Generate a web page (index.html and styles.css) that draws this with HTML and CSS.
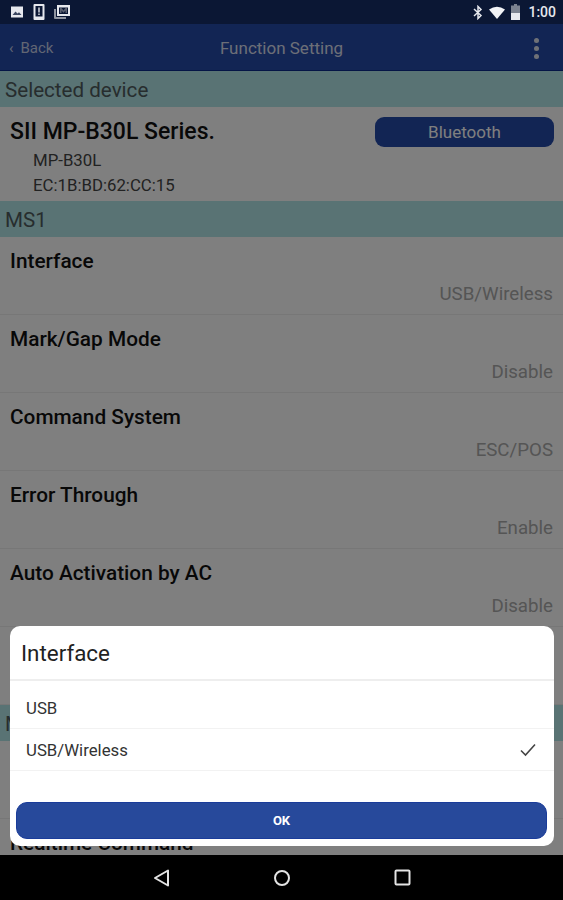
FILE: index.html
```html
<!DOCTYPE html>
<html lang="en">
<head>
  <meta charset="UTF-8" />
  <meta name="viewport" content="width=device-width, initial-scale=1.0"/>
  <title>Function Setting</title>
  <link rel="stylesheet" href="styles.css">
</head>
<body>
  <div class="screen">
    <div class="status-bar">
      <div class="status-left">
        <svg class="icon" width="16" height="16" viewBox="0 0 16 16"><path d="M2 2.500h12v11H2z" fill="#e6e8ee"/><path d="M3.500 11l3-3.500 2 2 1.500-1.300 2.500 2.800z" fill="#3a4560"/></svg>
        <svg class="icon" width="14" height="18" viewBox="0 0 14 18"><path fill-rule="evenodd" d="M2.500 1h9a1 1 0 0 1 1 1v14a1 1 0 0 1-1 1h-9a1 1 0 0 1-1-1V2a1 1 0 0 1 1-1zM3.500 3v10.500h7V3z" fill="#e6e8ee"/><path d="M6.300 4.500h1.400v5H6.300zM6.300 10.500h1.400v1.400H6.300z" fill="#e6e8ee"/></svg>
        <svg class="icon" width="18" height="16" viewBox="0 0 18 16"><path d="M1 5h2v8h10v2H2a1 1 0 0 1-1-1z" fill="#8f94a0"/><path fill-rule="evenodd" d="M4 1h13v11H4zM6 3.500V10h9V3.500z" fill="#e6e8ee"/><path d="M7 4h1.500l2 2.500 2-2.500H14v5h-1.500V6.500l-2 2.300-2-2.300V9H7z" fill="#5a6070"/></svg>
      </div>
      <div class="status-right">
        <svg class="icon" width="10" height="15" viewBox="0 0 10 15"><path d="M1 4l7 6.500L5 13.500V1.500L8 4.500 1 11" fill="none" stroke="#e6e8ee" stroke-width="1.500"/></svg>
        <svg class="icon" width="16" height="13" viewBox="0 0 16 13"><path d="M0 3.500Q8-2 16 3.500L8 13z" fill="#f2f3f6"/></svg>
        <svg class="icon" width="9" height="16" viewBox="0 0 9 16"><path d="M3 0h3v1.500h3V16H0V1.500h3z" fill="#7b8290"/><path d="M0 9h9v7H0z" fill="#e6e8ee"/></svg>
        <span class="clock">1:00</span>
      </div>
    </div>

    <div class="content">
      <div class="app-bar">
        <span class="back"><span class="chevron">&lsaquo;</span>Back</span>
        <span class="app-title">Function Setting</span>
        <span class="more"><i></i><i></i><i></i></span>
      </div>

      <div class="section">Selected device</div>
      <div class="device">
        <div class="device-info">
          <div class="device-name">SII MP-B30L Series.</div>
          <div class="device-line">MP-B30L</div>
          <div class="device-line">EC:1B:BD:62:CC:15</div>
        </div>
        <div class="conn-btn">Bluetooth</div>
      </div>

      <div class="section">MS1</div>
      <div class="row">
        <div class="row-title">Interface</div>
        <div class="row-value">USB/Wireless</div>
      </div>
      <div class="row">
        <div class="row-title">Mark/Gap Mode</div>
        <div class="row-value">Disable</div>
      </div>
      <div class="row">
        <div class="row-title">Command System</div>
        <div class="row-value">ESC/POS</div>
      </div>
      <div class="row">
        <div class="row-title">Error Through</div>
        <div class="row-value">Enable</div>
      </div>
      <div class="row">
        <div class="row-title">Auto Activation by AC</div>
        <div class="row-value">Disable</div>
      </div>
      <div class="row"></div>

      <div class="section">M</div>
      <div class="row"></div>
      <div class="row">
        <div class="row-title">Realtime Command</div>
      </div>

      <div class="overlay">
        <div class="dialog">
          <div class="dialog-title">Interface</div>
          <div class="option option-first">USB</div>
          <div class="option">
            USB/Wireless
            <svg class="check" width="18" height="14" viewBox="0 0 18 14"><path d="M2 7.500l4.500 4.500L16 1.500" fill="none" stroke="#444" stroke-width="1.600"/></svg>
          </div>
          <div class="dialog-btn">OK</div>
        </div>
      </div>
    </div>

    <div class="nav-bar">
      <svg width="17" height="18" viewBox="0 0 17 18"><path d="M15 1.500v15L2 9z" fill="none" stroke="#e4e4e4" stroke-width="2" stroke-linejoin="round"/></svg>
      <svg width="18" height="18" viewBox="0 0 18 18"><circle cx="9" cy="9" r="7" fill="none" stroke="#e4e4e4" stroke-width="2"/></svg>
      <svg width="17" height="17" viewBox="0 0 17 17"><rect x="1.500" y="1.500" width="14" height="14" rx="1" fill="none" stroke="#e4e4e4" stroke-width="2"/></svg>
    </div>
  </div>
</body>
</html>
```

FILE: styles.css
```css
* {
  box-sizing: border-box;
}
html, body {
  margin: 0;
  padding: 0;
}
body {
  font-family: Roboto, "Liberation Sans", sans-serif;
  background-color: #000;
}
.screen {
  width: 563px;
  height: 900px;
  display: flex;
  flex-direction: column;
  overflow: hidden;
}

/* status bar */
.status-bar {
  height: 24px;
  flex: none;
  background-color: #0b1734;
  display: flex;
  justify-content: space-between;
  align-items: center;
  padding: 0 7px 0 9px;
}
.status-left, .status-right {
  display: flex;
  align-items: center;
}
.status-left {
  gap: 7px;
}
.status-right {
  gap: 6px;
}
.icon {
  display: block;
}
.clock {
  color: #e6e8ee;
  font-size: 14px;
  font-weight: 500;
  margin-left: 2px;
}

/* main area, the overlay dims all of it */
.content {
  position: relative;
  height: 831px;
  flex: none;
  overflow: hidden;
  background-color: #fff;
}
.app-bar {
  height: 47px;
  padding-top: 2px;
  background-color: #254aa9;
  border-bottom: 1px solid #0a2a8c;
  display: flex;
  align-items: center;
  justify-content: center;
  position: relative;
  color: #fff;
}
.back {
  position: absolute;
  left: 9px;
  display: flex;
  gap: 7px;
  font-size: 15px;
  color: #c4cde6;
}
.app-title {
  font-size: 17px;
  color: #d8deee;
}
.more {
  position: absolute;
  right: 24px;
  display: flex;
  flex-direction: column;
  gap: 3px;
}
.more i {
  display: block;
  width: 5px;
  height: 5px;
  border-radius: 50%;
  background-color: #dfe3ee;
}
.section {
  height: 36px;
  line-height: 38px;
  padding-left: 5px;
  font-size: 20.6px;
  color: #4e5a5c;
  background-color: #b2e6e8;
}
.device {
  height: 94px;
  padding: 10px 9px 0 10px;
  display: flex;
  justify-content: space-between;
  align-items: flex-start;
}
.device-name {
  font-size: 23px;
  font-weight: 500;
  line-height: 30px;
  color: #111;
  margin-bottom: 1px;
}
.device-line {
  font-size: 16.8px;
  line-height: 25px;
  padding-left: 23px;
  color: #444;
}
.conn-btn {
  width: 179px;
  height: 30px;
  line-height: 30px;
  text-align: center;
  border-radius: 9px;
  font-size: 17px;
  color: #fff;
  background-color: #254aa9;
}
.row {
  height: 78px;
  padding: 11px 10px 0;
  border-bottom: 1px solid #eee;
}
.row-title {
  font-size: 20.8px;
  font-weight: 500;
  line-height: 26px;
  color: #111;
}
.row-value {
  font-size: 18.7px;
  line-height: 24px;
  margin-top: 8px;
  text-align: right;
  color: #aaa;
}

/* dialog */
.overlay {
  position: absolute;
  top: 0;
  left: 0;
  right: 0;
  bottom: 0;
  background-color: rgba(0,0,0,0.5);
  display: flex;
  align-items: flex-end;
  padding: 0 9px 9px 10px;
}
.dialog {
  width: 100%;
  height: 220px;
  background-color: #fff;
  border-radius: 10px;
  display: flex;
  flex-direction: column;
}
.dialog-title {
  height: 55px;
  line-height: 55px;
  padding-left: 11px;
  font-size: 22.4px;
  color: #222;
  border-bottom: 2px solid #eeeeee;
}
.option {
  height: 42px;
  padding: 0 17px 0 16px;
  display: flex;
  align-items: center;
  justify-content: space-between;
  font-size: 16.8px;
  color: #333;
  border-bottom: 1px solid #f2f2f2;
}
.option-first {
  height: 48px;
  padding-top: 6px;
}
.dialog-btn {
  height: 37px;
  line-height: 35px;
  margin: 31px 7px 0 6px;
  text-align: center;
  border-radius: 11px;
  font-size: 13px;
  font-weight: 700;
  color: #fff;
  background-color: #27499b;
  border: 1px solid #1a3c9a;
}

.nav-bar {
  height: 45px;
  flex: none;
  background-color: #000;
  display: flex;
  justify-content: center;
  align-items: center;
  gap: 103px;
}
```
